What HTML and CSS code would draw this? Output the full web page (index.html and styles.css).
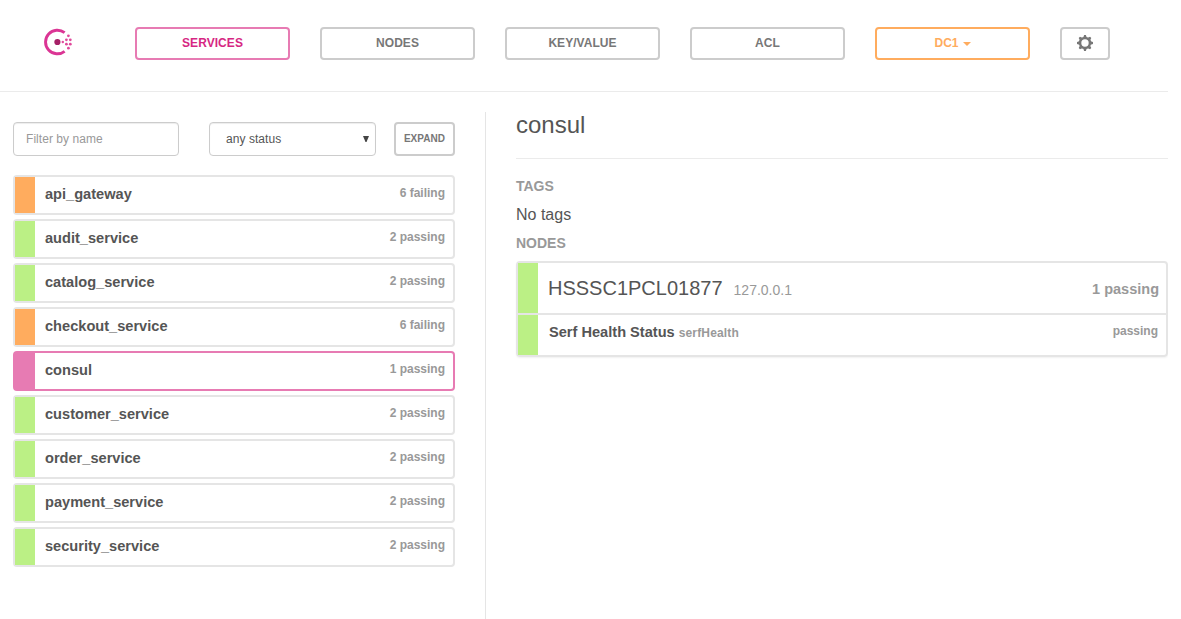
FILE: index.html
```html
<!DOCTYPE html>
<html lang="en">
<head>
<meta charset="utf-8">
<title>Consul</title>
<link rel="stylesheet" href="styles.css">
</head>
<body>
<div class="page">
  <header class="topbar">
    <svg class="logo" width="30" height="28" viewBox="0 0 30 28">
      <path d="M20.6 4.7A11.8 11.8 0 1 0 20.6 23.3" fill="none" stroke="#db3594" stroke-width="2.9"/>
      <circle cx="13.4" cy="14" r="3.1" fill="#a62067"/>
      <g fill="#e0489b">
        <circle cx="18.8" cy="14" r="1.2"/>
        <circle cx="22.4" cy="11.8" r="1.4"/><circle cx="22.4" cy="16.2" r="1.4"/>
        <circle cx="26.3" cy="11.8" r="1.4"/><circle cx="26.3" cy="16.2" r="1.4"/>
        <circle cx="24.4" cy="7.8" r="1.4"/><circle cx="24.4" cy="20.2" r="1.4"/>
      </g>
    </svg>
    <nav class="nav">
      <a class="btn active">SERVICES</a>
      <a class="btn">NODES</a>
      <a class="btn">KEY/VALUE</a>
      <a class="btn">ACL</a>
      <a class="btn dc">DC1<span class="caret"></span></a>
      <a class="btn settings">
        <svg width="16" height="16" viewBox="-8 -8 16 16" fill="#777">
          <path fill-rule="evenodd" d="M0-6.2A6.2 6.2 0 1 1 0 6.2A6.2 6.2 0 1 1 0-6.2ZM0-3.7A3.7 3.7 0 1 0 0 3.7A3.7 3.7 0 1 0 0-3.7Z"/>
          <path id="teeth" d="M-1.7-5.6L-.9-8H.9L1.7-5.6ZM-1.7 5.6L-.9 8H.9L1.7 5.6ZM-5.6-1.7L-8-.9V.9L-5.6 1.7ZM5.6-1.7L8-.9V.9L5.6 1.7Z"/>
          <use href="#teeth" transform="rotate(45)"/>
        </svg>
      </a>
    </nav>
  </header>
  <div class="columns">
    <aside class="sidebar">
      <div class="filters">
        <input class="field" type="text" placeholder="Filter by name">
        <div class="field select"><span>any status</span>
          <svg width="6" height="6" viewBox="0 0 6 6"><path d="M0 0H6L3.5 6H2.5Z" fill="#444"/></svg>
        </div>
        <button class="expand">EXPAND</button>
      </div>
      <div class="services">
        <div class="service failing"><span class="bar"></span><b class="name">api_gateway</b><span class="status">6 failing</span></div>
        <div class="service"><span class="bar"></span><b class="name">audit_service</b><span class="status">2 passing</span></div>
        <div class="service"><span class="bar"></span><b class="name">catalog_service</b><span class="status">2 passing</span></div>
        <div class="service failing"><span class="bar"></span><b class="name">checkout_service</b><span class="status">6 failing</span></div>
        <div class="service selected"><span class="bar"></span><b class="name">consul</b><span class="status">1 passing</span></div>
        <div class="service"><span class="bar"></span><b class="name">customer_service</b><span class="status">2 passing</span></div>
        <div class="service"><span class="bar"></span><b class="name">order_service</b><span class="status">2 passing</span></div>
        <div class="service"><span class="bar"></span><b class="name">payment_service</b><span class="status">2 passing</span></div>
        <div class="service"><span class="bar"></span><b class="name">security_service</b><span class="status">2 passing</span></div>
      </div>
    </aside>
    <main class="detail">
      <h1>consul</h1>
      <h5>TAGS</h5>
      <p class="tags">No tags</p>
      <h5>NODES</h5>
      <div class="node">
        <div class="node-head"><span class="bar"></span><span class="host">HSSSC1PCL01877</span><span class="ip">127.0.0.1</span><b class="total">1 passing</b></div>
        <div class="check"><span class="bar"></span><b class="name">Serf Health Status</b><span class="check-id">serfHealth</span><span class="status">passing</span></div>
      </div>
    </main>
  </div>
</div>
</body>
</html>
```
FILE: styles.css
```css
* { box-sizing: border-box; }
body {
  margin: 0;
  background: #fff;
  color: #555;
  font-family: "Liberation Sans", Arial, sans-serif;
  font-size: 12px;
}
.page {
  width: 1168px;
  height: 619px;
  display: flex;
  flex-direction: column;
  overflow: hidden;
}
.topbar {
  height: 92px;
  flex: none;
  display: flex;
  align-items: flex-start;
  padding: 27px 0 0 44px;
  border-bottom: 1px solid #ebebeb;
}
.logo { margin-top: 1px; }
.nav { display: flex; gap: 30px; margin-left: 61px; }
.btn {
  width: 155px;
  height: 33px;
  display: flex;
  justify-content: center;
  align-items: center;
  padding-bottom: 1px;
  border: 2px solid #ccc;
  border-radius: 4px;
  color: #777;
  font-size: 12px;
  font-weight: bold;
  letter-spacing: .05px;
}
.btn.active { border-color: #e77bb3; color: #d62783; }
.btn.dc { border-color: #ffac5e; color: #ffac5e; }
.btn.settings { width: 50px; }
.caret {
  margin: 2px 0 0 4px;
  border: 4px solid transparent;
  border-top-color: currentColor;
  border-bottom: 0;
}
.columns { flex: 1; display: flex; padding-left: 13px; }
.sidebar { width: 442px; padding-top: 30px; }
.filters { display: flex; }
.field {
  width: 166px;
  height: 34px;
  padding: 0 12px;
  border: 1px solid #ccc;
  border-radius: 4px;
  box-shadow: inset 0 1px 1px rgba(0, 0, 0, .075);
  background: #fff;
  color: #555;
  font: 12px "Liberation Sans", Arial, sans-serif;
  letter-spacing: .05px;
}
.field::placeholder { color: #999; opacity: 1; }
.select {
  width: 167px;
  margin: 0 18px 0 30px;
  padding: 0 6px 0 16px;
  display: flex;
  align-items: center;
  justify-content: space-between;
}
.expand {
  width: 61px;
  height: 34px;
  padding: 0 0 1px;
  border: 2px solid #ccc;
  border-radius: 4px;
  background: #fff;
  color: #777;
  font: bold 10px "Liberation Sans", Arial, sans-serif;
  letter-spacing: .05px;
}
.services { display: flex; flex-direction: column; gap: 4px; margin-top: 19px; }
.service {
  height: 40px;
  display: flex;
  border: 2px solid #e5e5e5;
  border-radius: 4px;
  line-height: 34px;
}
.bar { width: 20px; margin-right: 10px; background: #bbf085; }
.failing .bar { background: #ffac5e; }
.selected { border-color: #e77bb3; }
.selected .bar { background: #e77bb3; }
.name { font-size: 14.6px; }
.status {
  margin-left: auto;
  padding-right: 8px;
  line-height: 32px;
  font-weight: bold;
  color: #999;
}
.detail {
  flex: 1;
  margin: 20px 0 0 30px;
  padding-left: 30px;
  border-left: 1px solid #e5e5e5;
}
h1 {
  height: 47px;
  margin: 0 0 18px;
  border-bottom: 1px solid #ebebeb;
  font-size: 24px;
  font-weight: normal;
  line-height: 26px;
}
h5 { margin: 0; font-size: 14px; line-height: 18px; color: #999; }
.tags { margin: 9px 0 8px; font-size: 16px; line-height: 22px; }
.node {
  margin-top: 9px;
  height: 96px;
  border: 2px solid #e5e5e5;
  border-radius: 4px;
  box-shadow: 0 1px 2px rgba(0, 0, 0, .06);
}
.node-head {
  height: 52px;
  display: flex;
  align-items: stretch;
  border-bottom: 2px solid #e5e5e5;
  line-height: 50px;
}
.host { font-size: 20px; }
.ip { margin-left: 11px; padding-top: 2px; font-size: 14px; color: #999; }
.total { margin-left: auto; padding: 1px 7px 0 0; font-size: 14.5px; color: #999; }
.check { height: 40px; display: flex; line-height: 34px; }
.check .bar { margin-right: 11px; }
.check .status { padding-right: 8px; }
.check-id { margin-left: 4px; line-height: 36px; font-weight: bold; letter-spacing: .15px; color: #999; }
```
